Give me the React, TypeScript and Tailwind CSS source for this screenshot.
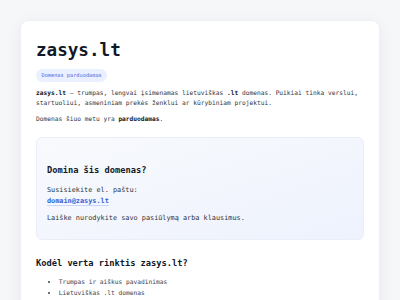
export default function App() {
  return (
    <div
      className="min-h-[300px] bg-[#f6f7f9] px-[20px] pt-[20px] text-[#2d3340]"
      style={{ fontFamily: '"DejaVu Sans Mono", "Liberation Mono", monospace' }}
    >
      <div className="rounded-[8px] border border-[#eef0f3] bg-white px-[15px] pt-[19px] pb-[20px] shadow-[0_4px_18px_rgba(20,30,60,0.06)]">
        <h1 className="text-[17.6px] font-bold leading-[1.2] text-[#111827]">zasys.lt</h1>
        <div className="mt-[8px] flex">
          <span className="rounded-full bg-[#eaf0ff] px-[5.5px] py-[2.5px] text-[5.27px] leading-[1.5] text-[#4d68dc]">
            Domenas parduodamas
          </span>
        </div>
        <p className="mt-[6px] text-[6.23px] leading-[10.4px]">
          <strong className="font-bold text-[#111827]">zasys.lt</strong> — trumpas, lengvai įsimenamas lietuviškas{" "}
          <strong className="font-bold text-[#111827]">.lt</strong> domenas. Puikiai tinka verslui, startuoliui,
          asmeniniam prekės ženklui ar kūrybiniam projektui.
        </p>
        <p className="mt-[5.2px] text-[6.23px] leading-[10.4px]">
          Domenas šiuo metu yra <strong className="font-bold text-[#111827]">parduodamas</strong>.
        </p>

        <div className="mt-[12.5px] rounded-[6px] border border-[#e9eef8] bg-gradient-to-br from-[#f8fafd] to-[#eef2fd] px-[10px] pt-[27px] pb-[15px]">
          <h2 className="text-[8.7px] font-bold leading-[1.3] text-[#111827]">Domina šis domenas?</h2>
          <p className="mt-[9px] text-[6.85px] leading-[11px]">
            Susisiekite el. paštu:
            <br />
            <a className="font-bold text-[#2b62d9] underline decoration-[#c7d6f7] underline-offset-[1.5px]">
              domain@zasys.lt
            </a>
          </p>
          <p className="mt-[5.8px] text-[6.85px] leading-[11px]">Laiške nurodykite savo pasiūlymą arba klausimus.</p>
        </div>

        <h2 className="mt-[18px] text-[8.7px] font-bold leading-[1.3] text-[#111827]">Kodėl verta rinktis zasys.lt?</h2>
        <ul className="mt-[8px] list-disc pl-[22.7px] text-[6.23px] leading-[10.6px] text-[#3a404c]">
          <li>Trumpas ir aiškus pavadinimas</li>
          <li>Lietuviškas .lt domenas</li>
          <li>Tinka ir prekės ženklui</li>
        </ul>
      </div>
    </div>
  );
}
